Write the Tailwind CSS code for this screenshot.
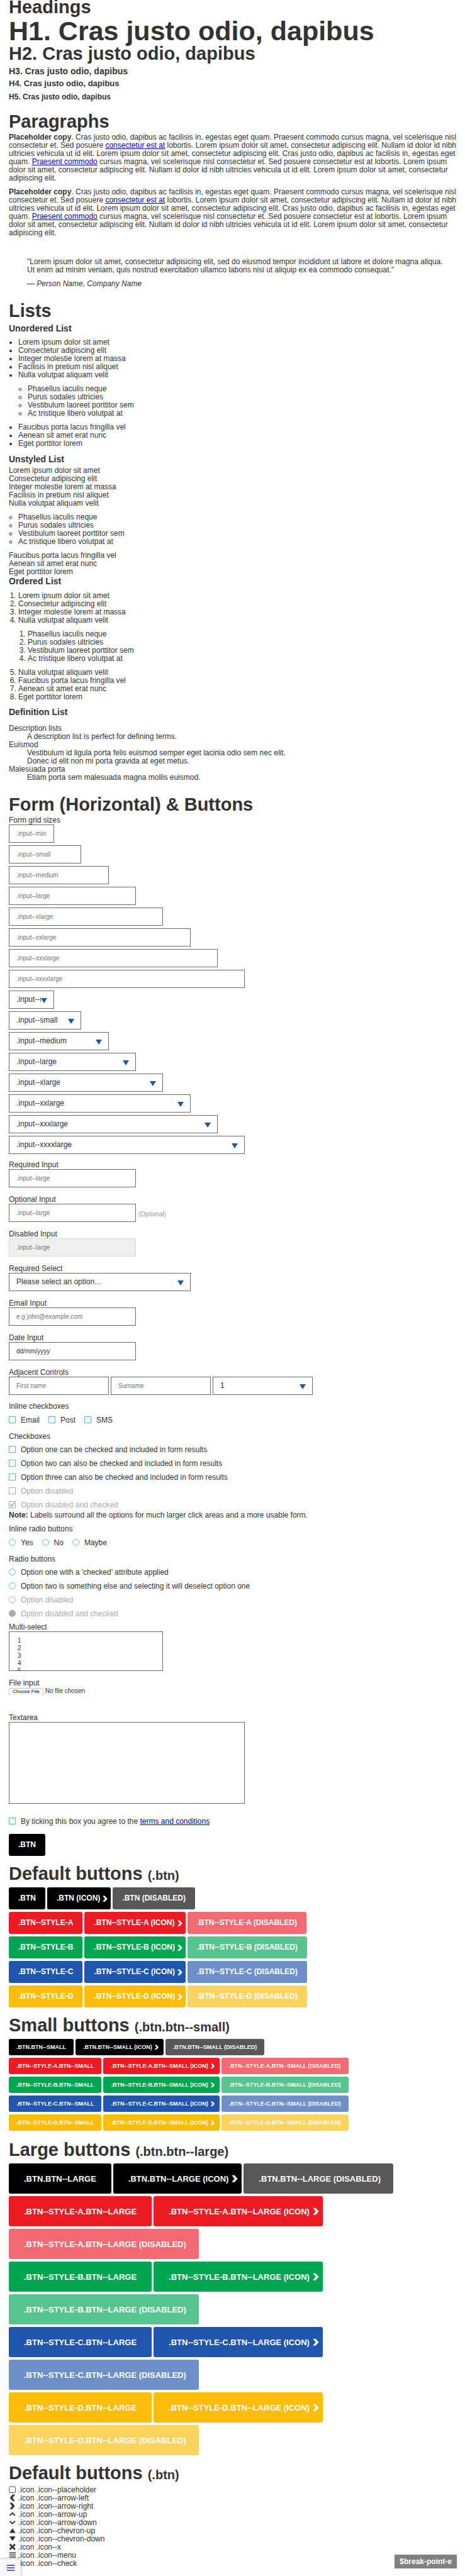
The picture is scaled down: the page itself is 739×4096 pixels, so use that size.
<!DOCTYPE html>
<html lang="en">
<head>
<meta charset="utf-8">
<meta name="viewport" content="width=device-width, initial-scale=1">
<title>Style guide</title>
<script src="https://cdn.jsdelivr.net/npm/@tailwindcss/browser@4"></script>
</head>
<body class="bg-white text-[#333] text-[12px] leading-[13px] font-['Liberation_Sans',Arial,sans-serif]">

<svg class="hidden" aria-hidden="true">
  <symbol id="i-placeholder" viewBox="0 0 15 15"><rect x="1.2" y="1.2" width="13" height="13" rx="2" fill="none" stroke="currentColor" stroke-width="1.2"/></symbol>
  <symbol id="i-left" viewBox="0 0 15 15"><path d="M8.2 .8H13.6L8 7.8 13.6 14.8H8.2L2.2 7.8Z" fill="currentColor"/></symbol>
  <symbol id="i-right" viewBox="0 0 15 15"><path d="M7 .8H1.6L7.2 7.8 1.6 14.8H7L13.2 7.8Z" fill="currentColor"/></symbol>
  <symbol id="i-up" viewBox="0 0 15 15"><path d="M1.8 10.8 7.8 5.2 13.8 10.8" fill="none" stroke="currentColor" stroke-width="2.6"/></symbol>
  <symbol id="i-down" viewBox="0 0 15 15"><path d="M1.8 5 7.8 10.6 13.8 5" fill="none" stroke="currentColor" stroke-width="2.6"/></symbol>
  <symbol id="i-chevup" viewBox="0 0 15 15"><path d="M8 2.8 14.6 12.8H1.3Z" fill="currentColor"/></symbol>
  <symbol id="i-chevdown" viewBox="0 0 15 15"><path d="M1.3 2.6H14.6L8 12.6Z" fill="currentColor"/></symbol>
  <symbol id="i-x" viewBox="0 0 15 15"><path d="M2.2 2 13.4 13.4M13.4 2 2.2 13.4" fill="none" stroke="currentColor" stroke-width="3.8"/></symbol>
  <symbol id="i-menu" viewBox="0 0 15 15"><path d="M1 3H15M1 7.4H15M1 11.8H15" fill="none" stroke="currentColor" stroke-width="2"/></symbol>
  <symbol id="i-check" viewBox="0 0 15 15"><path d="M3 7.4 6.2 10.6 12 3.6" fill="none" stroke="currentColor" stroke-width="2.8"/></symbol>
  <symbol id="i-select" viewBox="0 0 10 8"><path d="M0 0H10L5 8Z" fill="#1f56ae"/></symbol>
</svg>

<main class="pl-[14px] pb-3">
  <section class="font-bold">
    <h2 class="text-[29px] leading-[23px]">Headings</h2>
    <h1 class="mt-1.5 text-[43px] leading-[41px]">H1. Cras justo odio, dapibus</h1>
    <h2 class="mt-1 text-[29px] leading-[23px]">H2. Cras justo odio, dapibus</h2>
    <h3 class="mt-2 text-[14px] leading-[17px]">H3. Cras justo odio, dapibus</h3>
    <h4 class="mt-0.5 text-[13px] leading-[17px]">H4. Cras justo odio, dapibus</h4>
    <h5 class="mt-[5px] text-[12px] leading-[17px]">H5. Cras justo odio, dapibus</h5>
  </section>

  <section>
    <h2 class="mt-[19px] text-[29px] leading-[23px] font-bold">Paragraphs</h2>
    <p class="mt-[7px]"><strong>Placeholder copy</strong>. Cras justo odio, dapibus ac facilisis in, egestas eget quam. Praesent commodo cursus magna, vel scelerisque nisl consectetur et. Sed posuere <a href="#" class="text-[#00e] underline">consectetur est at</a> lobortis. Lorem ipsum dolor sit amet, consectetur adipiscing elit. Nullam id dolor id nibh ultricies vehicula ut id elit. Lorem ipsum dolor sit amet, consectetur adipiscing elit. Cras justo odio, dapibus ac facilisis in, egestas eget quam. <a href="#" class="text-[#00e] underline">Praesent commodo</a> cursus magna, vel scelerisque nisl consectetur et. Sed posuere consectetur est at lobortis. Lorem ipsum dolor sit amet, consectetur adipiscing elit. Nullam id dolor id nibh ultricies vehicula ut id elit. Lorem ipsum dolor sit amet, consectetur adipiscing elit.</p>
    <p class="mt-[9px]"><strong>Placeholder copy</strong>. Cras justo odio, dapibus ac facilisis in, egestas eget quam. Praesent commodo cursus magna, vel scelerisque nisl consectetur et. Sed posuere <a href="#" class="text-[#00e] underline">consectetur est at</a> lobortis. Lorem ipsum dolor sit amet, consectetur adipiscing elit. Nullam id dolor id nibh ultricies vehicula ut id elit. Lorem ipsum dolor sit amet, consectetur adipiscing elit. Cras justo odio, dapibus ac facilisis in, egestas eget quam. <a href="#" class="text-[#00e] underline">Praesent commodo</a> cursus magna, vel scelerisque nisl consectetur et. Sed posuere consectetur est at lobortis. Lorem ipsum dolor sit amet, consectetur adipiscing elit. Nullam id dolor id nibh ultricies vehicula ut id elit. Lorem ipsum dolor sit amet, consectetur adipiscing elit.</p>
    <blockquote class="mt-[33px] ml-[29px] mr-[29px]">
      <p>"Lorem ipsum dolor sit amet, consectetur adipisicing elit, sed do eiusmod tempor incididunt ut labore et dolore magna aliqua. Ut enim ad minim veniam, quis nostrud exercitation ullamco laboris nisi ut aliquip ex ea commodo consequat."</p>
      <footer class="mt-[9px] italic">— Person Name, Company Name</footer>
    </blockquote>
  </section>

  <section>
    <h2 class="mt-[25px] text-[29px] leading-[23px] font-bold">Lists</h2>
    <h3 class="mt-2 text-[14px] leading-[17px] font-bold">Unordered List</h3>
    <ul class="mt-[7px] pl-[15px] list-disc">
      <li>Lorem ipsum dolor sit amet</li>
      <li>Consectetur adipiscing elit</li>
      <li>Integer molestie lorem at massa</li>
      <li>Facilisis in pretium nisl aliquet</li>
      <li>Nulla volutpat aliquam velit
        <ul class="my-[9px] pl-[15px] list-[circle]">
          <li>Phasellus iaculis neque</li>
          <li>Purus sodales ultricies</li>
          <li>Vestibulum laoreet porttitor sem</li>
          <li>Ac tristique libero volutpat at</li>
        </ul>
      </li>
      <li>Faucibus porta lacus fringilla vel</li>
      <li>Aenean sit amet erat nunc</li>
      <li>Eget porttitor lorem</li>
    </ul>

    <h3 class="mt-2.5 text-[14px] leading-[17px] font-bold">Unstyled List</h3>
    <ul class="mt-[3px]">
      <li>Lorem ipsum dolor sit amet</li>
      <li>Consectetur adipiscing elit</li>
      <li>Integer molestie lorem at massa</li>
      <li>Facilisis in pretium nisl aliquet</li>
      <li>Nulla volutpat aliquam velit
        <ul class="my-[9px] pl-[15px] list-[circle]">
          <li>Phasellus iaculis neque</li>
          <li>Purus sodales ultricies</li>
          <li>Vestibulum laoreet porttitor sem</li>
          <li>Ac tristique libero volutpat at</li>
        </ul>
      </li>
      <li>Faucibus porta lacus fringilla vel</li>
      <li>Aenean sit amet erat nunc</li>
      <li>Eget porttitor lorem</li>
    </ul>

    <h3 class="text-[14px] leading-[17px] font-bold">Ordered List</h3>
    <ol class="mt-2 pl-[15px] list-decimal">
      <li>Lorem ipsum dolor sit amet</li>
      <li>Consectetur adipiscing elit</li>
      <li>Integer molestie lorem at massa</li>
      <li>Nulla volutpat aliquam velit
        <ol class="my-[9px] pl-[15px] list-decimal">
          <li>Phasellus iaculis neque</li>
          <li>Purus sodales ultricies</li>
          <li>Vestibulum laoreet porttitor sem</li>
          <li>Ac tristique libero volutpat at</li>
        </ol>
      </li>
      <li>Nulla volutpat aliquam velit</li>
      <li>Faucibus porta lacus fringilla vel</li>
      <li>Aenean sit amet erat nunc</li>
      <li>Eget porttitor lorem</li>
    </ol>

    <h3 class="mt-[9px] text-[14px] leading-[17px] font-bold">Definition List</h3>
    <dl class="mt-[11px] [&_dd]:ml-[29px]">
      <dt>Description lists</dt>
      <dd>A description list is perfect for defining terms.</dd>
      <dt>Euismod</dt>
      <dd>Vestibulum id ligula porta felis euismod semper eget lacinia odio sem nec elit.</dd>
      <dd>Donec id elit non mi porta gravida at eget metus.</dd>
      <dt>Malesuada porta</dt>
      <dd>Etiam porta sem malesuada magna mollis euismod.</dd>
    </dl>
  </section>

  <form class="[&_input[type=text]]:block [&_input[type=text]]:h-[29px] [&_input[type=text]]:border [&_input[type=text]]:border-[#6d6d6d] [&_input[type=text]]:px-[11px] [&_input[type=text]]:text-[10px] [&_input[type=email]]:block [&_input[type=email]]:h-[29px] [&_input[type=email]]:border [&_input[type=email]]:border-[#6d6d6d] [&_input[type=email]]:px-[11px] [&_input[type=email]]:text-[10px] [&_input]:placeholder:text-[#757575] [&_.pick]:relative [&_.pick_select]:block [&_.pick_select]:w-full [&_.pick_select]:h-[29px] [&_.pick_select]:appearance-none [&_.pick_select]:border [&_.pick_select]:border-[#6d6d6d] [&_.pick_select]:bg-white [&_.pick_select]:pl-[11px] [&_.pick_select]:pr-5 [&_.pick_svg]:absolute [&_.pick_svg]:right-[11px] [&_.pick_svg]:top-[12px] [&_.pick_svg]:h-2 [&_.pick_svg]:w-[10px] [&_.pick_svg]:pointer-events-none">
    <h2 class="mt-[25px] text-[29px] leading-[23px] font-bold">Form (Horizontal) &amp; Buttons</h2>
    <fieldset>
      <legend class="pt-[7px]">Form grid sizes</legend>
      <div class="flex flex-col gap-1">
        <input type="text" aria-label="Mini input" placeholder=".input--mini" class="w-[72px]">
        <input type="text" aria-label="Small input" placeholder=".input--small" class="w-[115px]">
        <input type="text" aria-label="Medium input" placeholder=".input--medium" class="w-[159px]">
        <input type="text" aria-label="Large input" placeholder=".input--large" class="w-[202px]">
        <input type="text" aria-label="Extra large input" placeholder=".input--xlarge" class="w-[245px]">
        <input type="text" aria-label="2x large input" placeholder=".input--xxlarge" class="w-[289px]">
        <input type="text" aria-label="3x large input" placeholder=".input--xxxlarge" class="w-[332px]">
        <input type="text" aria-label="4x large input" placeholder=".input--xxxxlarge" class="w-[375px]">
        <div class="pick w-[72px]"><select aria-label="Mini select"><option>.input--mini</option></select><svg aria-hidden="true"><use href="#i-select"/></svg></div>
        <div class="pick w-[115px]"><select aria-label="Small select"><option>.input--small</option></select><svg aria-hidden="true"><use href="#i-select"/></svg></div>
        <div class="pick w-[159px]"><select aria-label="Medium select"><option>.input--medium</option></select><svg aria-hidden="true"><use href="#i-select"/></svg></div>
        <div class="pick w-[202px]"><select aria-label="Large select"><option>.input--large</option></select><svg aria-hidden="true"><use href="#i-select"/></svg></div>
        <div class="pick w-[245px]"><select aria-label="Extra large select"><option>.input--xlarge</option></select><svg aria-hidden="true"><use href="#i-select"/></svg></div>
        <div class="pick w-[289px]"><select aria-label="2x large select"><option>.input--xxlarge</option></select><svg aria-hidden="true"><use href="#i-select"/></svg></div>
        <div class="pick w-[332px]"><select aria-label="3x large select"><option>.input--xxxlarge</option></select><svg aria-hidden="true"><use href="#i-select"/></svg></div>
        <div class="pick w-[375px]"><select aria-label="4x large select"><option>.input--xxxxlarge</option></select><svg aria-hidden="true"><use href="#i-select"/></svg></div>
      </div>
    </fieldset>

    <div class="mt-[11px] flex flex-col gap-[13px] [&_label]:block">
      <div><label for="req">Required Input</label><input id="req" type="text" placeholder=".input--large" class="w-[202px]"></div>
      <div><label for="opt">Optional Input</label>
        <div class="flex items-center gap-1"><input id="opt" type="text" placeholder=".input--large" class="w-[202px]"><span class="pt-[3px] text-[10px] text-[#999]">(Optional)</span></div></div>
      <div><label for="dis">Disabled Input</label><input id="dis" type="text" disabled placeholder=".input--large" class="w-[202px] bg-[#efefef] border-[#d9d9d9]!"></div>
      <div><label for="sel">Required Select</label><div class="pick w-[289px]"><select id="sel"><option>Please select an option…</option></select><svg aria-hidden="true"><use href="#i-select"/></svg></div></div>
      <div><label for="mail">Email Input</label><input id="mail" type="email" placeholder="e.g john@example.com" class="w-[202px]"></div>
      <div><label for="date">Date Input</label><input id="date" type="text" placeholder="dd/mm/yyyy" class="w-[202px] placeholder:text-[#333]!"></div>
      <div><label for="first">Adjacent Controls</label>
        <div class="flex gap-[3px]">
          <input id="first" type="text" placeholder="First name" class="w-[159px]">
          <input type="text" aria-label="Surname" placeholder="Surname" class="w-[159px]">
          <div class="pick w-[159px]"><select aria-label="Number"><option>1</option><option>2</option></select><svg aria-hidden="true"><use href="#i-select"/></svg></div>
        </div></div>
    </div>

    <div class="[&_label]:flex [&_label]:gap-2 [&_label_input]:size-[11px] [&_label_input]:shrink-0 [&_label_input]:appearance-none [&_label_input]:border [&_label_input]:border-[#5bbbd6] [&_input[type=radio]]:rounded-full [&_label_input:disabled]:border-[#aaa] [&_label:has(:disabled)]:text-[#aaa]">
      <p class="mt-3">Inline checkboxes</p>
      <div class="mt-[9px] flex gap-[14px]">
        <label><input type="checkbox">Email</label>
        <label><input type="checkbox">Post</label>
        <label><input type="checkbox">SMS</label>
      </div>
      <p class="mt-[13px]">Checkboxes</p>
      <div class="mt-2 flex flex-col items-start gap-[9px]">
        <label><input type="checkbox">Option one can be checked and included in form results</label>
        <label><input type="checkbox">Option two can also be checked and included in form results</label>
        <label><input type="checkbox">Option three can also be checked and included in form results</label>
        <label><input type="checkbox" disabled>Option disabled</label>
        <label class="relative"><input type="checkbox" disabled checked>Option disabled and checked<svg class="absolute left-0 top-0 size-[11px]" aria-hidden="true"><use href="#i-check"/></svg></label>
      </div>
      <p class="mt-[3px]"><strong>Note:</strong> Labels surround all the options for much larger click areas and a more usable form.</p>
      <p class="mt-[9px]">Inline radio buttons</p>
      <div class="mt-[9px] flex gap-[14px]">
        <label><input type="radio" name="inline">Yes</label>
        <label><input type="radio" name="inline">No</label>
        <label><input type="radio" name="inline">Maybe</label>
      </div>
      <p class="mt-[13px]">Radio buttons</p>
      <div class="mt-2 flex flex-col items-start gap-[9px]">
        <label><input type="radio" name="opts">Option one with a 'checked' attribute applied</label>
        <label><input type="radio" name="opts">Option two is something else and selecting it will deselect option one</label>
        <label><input type="radio" name="opts-off" disabled>Option disabled</label>
        <label><input type="radio" name="opts-off" disabled checked class="bg-[#aaa]">Option disabled and checked</label>
      </div>
    </div>

    <label for="multi" class="mt-2 block">Multi-select</label>
    <select id="multi" multiple class="block h-[63px] w-[245px] overflow-hidden border border-[#6d6d6d] bg-white px-[13px] pt-2 [scrollbar-width:none] text-[10px] [&_option]:h-3 [&_option]:min-h-3 [&_option]:p-0 [&_option]:leading-3">
      <option>1</option><option>2</option><option>3</option><option>4</option><option>5</option>
    </select>

    <label for="file" class="mt-[13px] block">File input</label>
    <input id="file" type="file" class="block h-[13px] text-[10px] leading-[11px] file:mr-[3px] file:h-[13px] file:rounded-[3px] file:border file:border-[#c4c4c4] file:bg-white file:px-[5px] file:text-[8px] file:leading-[10px] file:text-black">

    <label for="area" class="mt-[29px] block">Textarea</label>
    <textarea id="area" class="block h-[130px] w-[375px] resize-none border border-[#6d6d6d]"></textarea>

    <label class="mt-[22px] flex gap-2"><input type="checkbox" class="size-[11px] appearance-none border border-[#5bbbd6]"><span>By ticking this box you agree to the <a href="#" class="text-[#00e] underline">terms and conditions</a></span></label>
    <button type="button" class="mt-[13px] block h-[35px] rounded-[3px] bg-black px-[15px] font-bold text-white">.BTN</button>
  </form>

  <section>
    <h2 class="mt-[17px] text-[29px] leading-[23px] font-bold">Default buttons <small class="text-[20px] leading-[16px]">(.btn)</small></h2>
    <div class="mt-2.5 flex flex-col gap-1 font-bold text-white [&>div]:flex [&>div]:flex-wrap [&>div]:gap-[3px] [&_button]:flex [&_button]:h-[35px] [&_button]:items-center [&_button]:gap-[3px] [&_button]:rounded-[3px] [&_button]:px-[15px] [&_button:has(svg)]:pr-1 [&_button:disabled]:opacity-65 [&_svg]:size-[10px]">
      <div class="[&_button]:bg-black"><button>.BTN</button><button>.BTN (ICON)<svg aria-hidden="true"><use href="#i-right"/></svg></button><button disabled>.BTN (DISABLED)</button></div>
      <div class="[&_button]:bg-[#ed1c24]"><button>.BTN--STYLE-A</button><button>.BTN--STYLE-A (ICON)<svg aria-hidden="true"><use href="#i-right"/></svg></button><button disabled>.BTN--STYLE-A (DISABLED)</button></div>
      <div class="[&_button]:bg-[#00a651]"><button>.BTN--STYLE-B</button><button>.BTN--STYLE-B (ICON)<svg aria-hidden="true"><use href="#i-right"/></svg></button><button disabled>.BTN--STYLE-B (DISABLED)</button></div>
      <div class="[&_button]:bg-[#2056ae]"><button>.BTN--STYLE-C</button><button>.BTN--STYLE-C (ICON)<svg aria-hidden="true"><use href="#i-right"/></svg></button><button disabled>.BTN--STYLE-C (DISABLED)</button></div>
      <div class="[&_button]:bg-[#fbbc0a]"><button>.BTN--STYLE-D</button><button>.BTN--STYLE-D (ICON)<svg aria-hidden="true"><use href="#i-right"/></svg></button><button disabled>.BTN--STYLE-D (DISABLED)</button></div>
    </div>
  </section>

  <section>
    <h2 class="mt-[17px] text-[29px] leading-[23px] font-bold">Small buttons <small class="text-[20px] leading-[16px]">(.btn.btn--small)</small></h2>
    <div class="mt-2.5 flex flex-col gap-1 text-[9px] font-bold text-white [&>div]:flex [&>div]:flex-wrap [&>div]:gap-[3px] [&_button]:flex [&_button]:h-[26px] [&_button]:items-center [&_button]:gap-[3px] [&_button]:rounded-[3px] [&_button]:px-3 [&_button:has(svg)]:pr-[7px] [&_button:disabled]:opacity-65 [&_svg]:size-[8px]">
      <div class="[&_button]:bg-black"><button>.BTN.BTN--SMALL</button><button>.BTN.BTN--SMALL (ICON)<svg aria-hidden="true"><use href="#i-right"/></svg></button><button disabled>.BTN.BTN--SMALL (DISABLED)</button></div>
      <div class="[&_button]:bg-[#ed1c24]"><button>.BTN--STYLE-A.BTN--SMALL</button><button>.BTN--STYLE-A.BTN--SMALL (ICON)<svg aria-hidden="true"><use href="#i-right"/></svg></button><button disabled>.BTN--STYLE-A.BTN--SMALL (DISABLED)</button></div>
      <div class="[&_button]:bg-[#00a651]"><button>.BTN--STYLE-B.BTN--SMALL</button><button>.BTN--STYLE-B.BTN--SMALL (ICON)<svg aria-hidden="true"><use href="#i-right"/></svg></button><button disabled>.BTN--STYLE-B.BTN--SMALL (DISABLED)</button></div>
      <div class="[&_button]:bg-[#2056ae]"><button>.BTN--STYLE-C.BTN--SMALL</button><button>.BTN--STYLE-C.BTN--SMALL (ICON)<svg aria-hidden="true"><use href="#i-right"/></svg></button><button disabled>.BTN--STYLE-C.BTN--SMALL (DISABLED)</button></div>
      <div class="[&_button]:bg-[#fbbc0a]"><button>.BTN--STYLE-D.BTN--SMALL</button><button>.BTN--STYLE-D.BTN--SMALL (ICON)<svg aria-hidden="true"><use href="#i-right"/></svg></button><button disabled>.BTN--STYLE-D.BTN--SMALL (DISABLED)</button></div>
    </div>
  </section>

  <section>
    <h2 class="mt-[19px] text-[29px] leading-[23px] font-bold">Large buttons <small class="text-[20px] leading-[16px]">(.btn.btn--large)</small></h2>
    <div class="mt-2.5 flex flex-col gap-1 text-[13px] font-bold text-white [&>div]:flex [&>div]:flex-wrap [&>div]:gap-x-[3px] [&>div]:gap-y-1 [&_button]:flex [&_button]:h-[48px] [&_button]:items-center [&_button]:gap-1 [&_button]:rounded-[3px] [&_button]:px-6 [&_button:has(svg)]:pr-[5px] [&_button:disabled]:opacity-65 [&_button:disabled]:pr-5 [&_svg]:size-[12px]">
      <div class="[&_button]:bg-black"><button>.BTN.BTN--LARGE</button><button>.BTN.BTN--LARGE (ICON)<svg aria-hidden="true"><use href="#i-right"/></svg></button><button disabled>.BTN.BTN--LARGE (DISABLED)</button></div>
      <div class="[&_button]:bg-[#ed1c24]"><button>.BTN--STYLE-A.BTN--LARGE</button><button>.BTN--STYLE-A.BTN--LARGE (ICON)<svg aria-hidden="true"><use href="#i-right"/></svg></button><button disabled>.BTN--STYLE-A.BTN--LARGE (DISABLED)</button></div>
      <div class="[&_button]:bg-[#00a651]"><button>.BTN--STYLE-B.BTN--LARGE</button><button>.BTN--STYLE-B.BTN--LARGE (ICON)<svg aria-hidden="true"><use href="#i-right"/></svg></button><button disabled>.BTN--STYLE-B.BTN--LARGE (DISABLED)</button></div>
      <div class="[&_button]:bg-[#2056ae]"><button>.BTN--STYLE-C.BTN--LARGE</button><button>.BTN--STYLE-C.BTN--LARGE (ICON)<svg aria-hidden="true"><use href="#i-right"/></svg></button><button disabled>.BTN--STYLE-C.BTN--LARGE (DISABLED)</button></div>
      <div class="[&_button]:bg-[#fbbc0a]"><button>.BTN--STYLE-D.BTN--LARGE</button><button>.BTN--STYLE-D.BTN--LARGE (ICON)<svg aria-hidden="true"><use href="#i-right"/></svg></button><button disabled>.BTN--STYLE-D.BTN--LARGE (DISABLED)</button></div>
    </div>
  </section>

  <section>
    <h2 class="mt-[17px] text-[29px] leading-[23px] font-bold">Default buttons <small class="text-[20px] leading-[16px]">(.btn)</small></h2>
    <ul class="mt-[9px] [&_li]:flex [&_li]:gap-1 [&_svg]:size-[11px]">
      <li><svg aria-hidden="true"><use href="#i-placeholder"/></svg>.icon .icon--placeholder</li>
      <li><svg aria-hidden="true"><use href="#i-left"/></svg>.icon .icon--arrow-left</li>
      <li><svg aria-hidden="true"><use href="#i-right"/></svg>.icon .icon--arrow-right</li>
      <li><svg aria-hidden="true"><use href="#i-up"/></svg>.icon .icon--arrow-up</li>
      <li><svg aria-hidden="true"><use href="#i-down"/></svg>.icon .icon--arrow-down</li>
      <li><svg aria-hidden="true"><use href="#i-chevup"/></svg>.icon .icon--chevron-up</li>
      <li><svg aria-hidden="true"><use href="#i-chevdown"/></svg>.icon .icon--chevron-down</li>
      <li><svg aria-hidden="true"><use href="#i-x"/></svg>.icon .icon--x</li>
      <li><svg aria-hidden="true"><use href="#i-menu"/></svg>.icon .icon--menu</li>
      <li><svg aria-hidden="true"><use href="#i-check"/></svg>.icon .icon--check</li>
    </ul>
  </section>
</main>

<!-- Floating menu toggle and active breakpoint badge -->
<button type="button" aria-label="Menu" class="fixed bottom-0 left-0 flex h-[27px] w-[33px] items-center justify-center rounded-t-[3px] bg-[#f8f8f8] shadow-[0_0_5px_rgba(0,0,0,0.4)]">
  <svg viewBox="0 0 12 10" class="h-[10px] w-[12px]" aria-hidden="true"><path d="M0 1H12M0 5H12M0 9H12" stroke="#4f66c4" stroke-width="2"/></svg>
</button>
<div class="fixed right-[13px] bottom-[12px] bg-[#808080] px-2 py-1 leading-[14px] font-bold text-white">$break-point-e</div>
</body>
</html>
